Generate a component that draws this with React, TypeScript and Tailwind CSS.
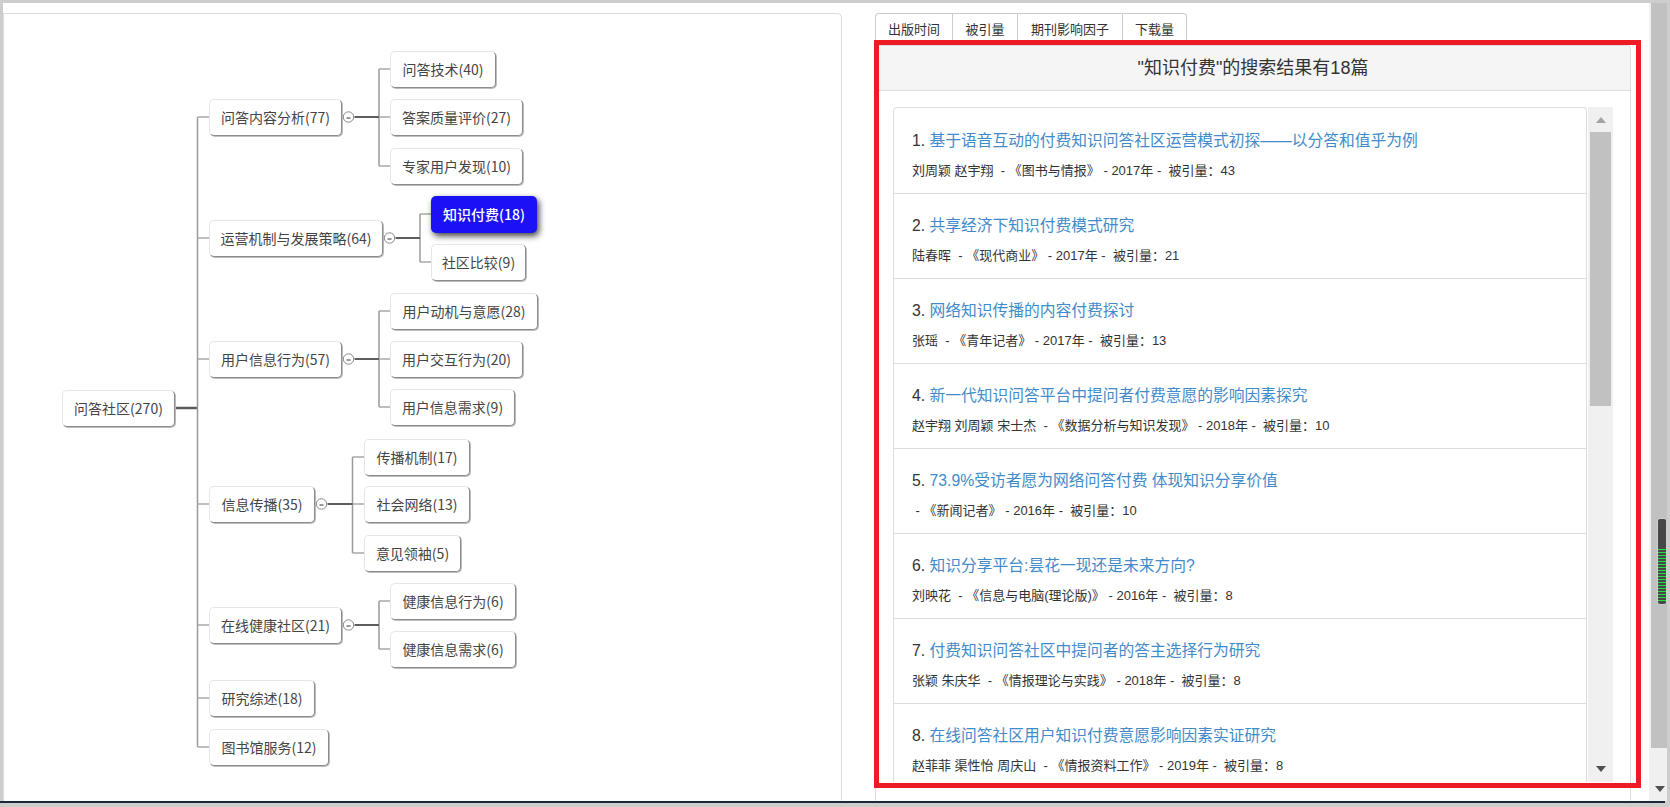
import React from "react";

type N = { t: string; x: number; cy: number; w: number; hl?: boolean };

const nodes: N[] = [
  { t: "问答社区(270)", x: 62, cy: 408, w: 113 },
  { t: "问答内容分析(77)", x: 209, cy: 117, w: 133 },
  { t: "运营机制与发展策略(64)", x: 209, cy: 238, w: 174 },
  { t: "用户信息行为(57)", x: 209, cy: 359, w: 133 },
  { t: "信息传播(35)", x: 209, cy: 504, w: 106 },
  { t: "在线健康社区(21)", x: 209, cy: 625, w: 133 },
  { t: "研究综述(18)", x: 209, cy: 698, w: 106 },
  { t: "图书馆服务(12)", x: 209, cy: 747, w: 120 },
  { t: "问答技术(40)", x: 390, cy: 69, w: 106 },
  { t: "答案质量评价(27)", x: 390, cy: 117, w: 133 },
  { t: "专家用户发现(10)", x: 390, cy: 166, w: 133 },
  { t: "知识付费(18)", x: 431, cy: 214, w: 106, hl: true },
  { t: "社区比较(9)", x: 431, cy: 262, w: 95 },
  { t: "用户动机与意愿(28)", x: 390, cy: 311, w: 148 },
  { t: "用户交互行为(20)", x: 390, cy: 359, w: 133 },
  { t: "用户信息需求(9)", x: 390, cy: 407, w: 125 },
  { t: "传播机制(17)", x: 364, cy: 457, w: 106 },
  { t: "社会网络(13)", x: 364, cy: 504, w: 106 },
  { t: "意见领袖(5)", x: 364, cy: 553, w: 97 },
  { t: "健康信息行为(6)", x: 390, cy: 601, w: 126 },
  { t: "健康信息需求(6)", x: 390, cy: 649, w: 126 },
];

const groups = [
  { c: 348.5, cy: 117, vx: 379, kids: [69, 117, 166], kx: 390 },
  { c: 389.5, cy: 238, vx: 420, kids: [214, 262], kx: 431 },
  { c: 348.5, cy: 359, vx: 379, kids: [311, 359, 407], kx: 390 },
  { c: 321.5, cy: 504, vx: 352.5, kids: [457, 504, 553], kx: 364 },
  { c: 348.5, cy: 625, vx: 379, kids: [601, 649], kx: 390 },
];

const l1 = [117, 238, 359, 504, 625, 698, 747];

const OX = 4;
const OY = 14;

const items = [
  { t: "基于语音互动的付费知识问答社区运营模式初探——以分答和值乎为例", a: "刘周颖 赵宇翔", j: "图书与情报", y: "2017", c: "43" },
  { t: "共享经济下知识付费模式研究", a: "陆春晖", j: "现代商业", y: "2017", c: "21" },
  { t: "网络知识传播的内容付费探讨", a: "张瑶", j: "青年记者", y: "2017", c: "13" },
  { t: "新一代知识问答平台中提问者付费意愿的影响因素探究", a: "赵宇翔 刘周颖 宋士杰", j: "数据分析与知识发现", y: "2018", c: "10" },
  { t: "73.9%受访者愿为网络问答付费 体现知识分享价值", a: "", j: "新闻记者", y: "2016", c: "10" },
  { t: "知识分享平台:昙花一现还是未来方向?", a: "刘映花", j: "信息与电脑(理论版)", y: "2016", c: "8" },
  { t: "付费知识问答社区中提问者的答主选择行为研究", a: "张颖 朱庆华", j: "情报理论与实践", y: "2018", c: "8" },
  { t: "在线问答社区用户知识付费意愿影响因素实证研究", a: "赵菲菲 渠性怡 周庆山", j: "情报资料工作", y: "2019", c: "8" },
];

function MindMap() {
  return (
    <div className="absolute inset-0 overflow-hidden font-[family-name:'Noto_Sans_CJK_SC','Noto_Sans',sans-serif]">
      <svg
        className="absolute left-0 top-0"
        width={838}
        height={787}
        viewBox={`${OX} ${OY} 838 787`}
      >
        <line x1={175} y1={408} x2={197.5} y2={408} stroke="#5a5a5a" strokeWidth={2.5} />
        <line x1={197.5} y1={117} x2={197.5} y2={747} stroke="#9a9a9a" strokeWidth={1.5} />
        {l1.map((y) => (
          <line key={y} x1={197.5} y1={y} x2={209} y2={y} stroke="#a8a8a8" strokeWidth={1.5} />
        ))}
        {groups.map((g, i) => (
          <g key={i}>
            <line
              x1={g.vx}
              y1={Math.min(...g.kids)}
              x2={g.vx}
              y2={Math.max(...g.kids)}
              stroke="#9a9a9a"
              strokeWidth={1.5}
            />
            {g.kids.map((k) => (
              <line key={k} x1={g.vx} y1={k} x2={g.kx} y2={k} stroke="#a8a8a8" strokeWidth={1.5} />
            ))}
            <line x1={g.c + 6} y1={g.cy} x2={g.vx} y2={g.cy} stroke="#5e5e5e" strokeWidth={2} />
            <circle cx={g.c} cy={g.cy} r={5.2} fill="#fff" stroke="#8a8a8a" strokeWidth={1} />
            <line x1={g.c - 2} y1={g.cy + 1} x2={g.c + 2} y2={g.cy + 1} stroke="#333" strokeWidth={1} />
          </g>
        ))}
      </svg>
      {nodes.map((n) => (
        <div
          key={n.t}
          className={
            n.hl
              ? "absolute flex h-[37px] items-center justify-center whitespace-nowrap rounded-[5px] bg-[#1a12f5] text-[14px] font-medium text-white shadow-[2px_3px_6px_rgba(0,0,0,0.75)]"
              : "absolute flex h-[37px] items-center justify-center whitespace-nowrap rounded-[5px] border border-[#e6e6e6] border-r-[#8c8c8c] border-b-[#8c8c8c] bg-white text-[14px] text-[#444] shadow-[1px_1px_0_#bdbdbd]"
          }
          style={{ left: n.x - OX, top: n.cy - 18 - OY, width: n.w }}
        >
          {n.t}
        </div>
      ))}
    </div>
  );
}

function ResultList() {
  return (
    <div className="flex h-[675px]">
      <div className="w-[694px] overflow-hidden rounded-t-[4px] border border-b-0 border-[#dddddd] pt-[1px]">
        {items.map((it, i) => (
          <div key={i} className="h-[85px] border-b border-[#dddddd] pl-[18px] pt-[21px]">
            <div className="whitespace-nowrap text-[15.75px] leading-[22px]">
              <span className="text-[#333]">{i + 1}. </span>
              <span className="text-[#428bca]">{it.t}</span>
            </div>
            <div className="mt-[10px] whitespace-nowrap text-[13px] leading-[18px] text-[#333]">
              {it.a ? it.a + "\u00a0 - " : "\u00a0- "}《{it.j}》 - {it.y}年 -{"\u00a0 "}被引量：{it.c}
            </div>
          </div>
        ))}
      </div>
      <div className="ml-[1px] flex w-[25px] flex-col items-center bg-[#f0f0f0]">
        <div className="mt-[10px] h-0 w-0 border-x-[5.5px] border-b-[6px] border-x-transparent border-b-[#a3a3a3]" />
        <div className="mt-[9px] h-[274px] w-[21px] bg-[#c1c1c1]" />
        <div className="flex-1" />
        <div className="mb-[10px] h-0 w-0 border-x-[5.5px] border-t-[6px] border-x-transparent border-t-[#505050]" />
      </div>
    </div>
  );
}

export default function App() {
  const tabs = [
    { t: "出版时间", w: "w-[78px] border-l rounded-tl-[4px]" },
    { t: "被引量", w: "w-[65px]" },
    { t: "期刊影响因子", w: "w-[105px]" },
    { t: "下载量", w: "w-[64px] rounded-tr-[4px]" },
  ];
  return (
    <div className="flex h-[807px] w-[1670px] flex-col overflow-hidden bg-[#cdcdcd] font-[family-name:'Liberation_Sans','Noto_Sans_CJK_SC',sans-serif]">
      <div className="h-[3px] shrink-0" />
      <div className="flex h-[798px] shrink-0">
        <div className="w-[3px] shrink-0" />
        <div className="relative flex w-[1646px] shrink-0 bg-white">
          <div className="relative mt-[10px] w-[839px] shrink-0 rounded-tr-[5px] border border-b-0 border-[#dcdcdc]">
            <MindMap />
          </div>

          <div className="ml-[33px] flex w-[756px] shrink-0 flex-col pt-[10px]">
            <div className="flex h-[32px] shrink-0">
              {tabs.map((tb) => (
                <div
                  key={tb.t}
                  className={`flex items-center justify-center border-r border-t border-[#cccccc] bg-white text-[13px] text-[#333] ${tb.w}`}
                >
                  {tb.t}
                </div>
              ))}
            </div>
            <div className="flex flex-1 flex-col rounded-tr-[4px] border border-b-0 border-[#dddddd]">
              <div className="flex h-[45px] shrink-0 items-center justify-center rounded-tr-[4px] border-b border-[#dddddd] bg-[#f5f5f5] text-[18px] text-[#333]">
                "知识付费"的搜索结果有18篇
              </div>
              <div className="px-[17px] pt-[16px]">
                <ResultList />
              </div>
            </div>
          </div>

          <div className="pointer-events-none absolute left-[871px] top-[37px] h-[748px] w-[767px] border-[5px] border-[#ed1c24]" />
        </div>

        <div className="relative flex w-[18px] shrink-0 flex-col bg-[#f0f0f0]">
          <div className="ml-[2px] h-[745px] w-[16px] bg-[#c1c1c1]" />
          <div className="ml-[6px] mt-[38px] h-0 w-0 border-x-[5.5px] border-t-[6px] border-x-transparent border-t-[#505050]" />
          <div className="absolute left-[8px] top-[515px] flex h-[87px] w-[10px] flex-col items-end gap-[2px] rounded-[3px] border border-[#d0d0d0] bg-[#474747] pt-[30px]">
            {Array.from({ length: 18 }).map((_, i) => (
              <div key={i} className="h-[1px] w-[8px] bg-[#22e040]" />
            ))}
          </div>
        </div>
        <div className="w-[3px] shrink-0" />
      </div>
      <div className="mr-[5px] h-[2px] shrink-0 bg-[#1c2836]" />
    </div>
  );
}
